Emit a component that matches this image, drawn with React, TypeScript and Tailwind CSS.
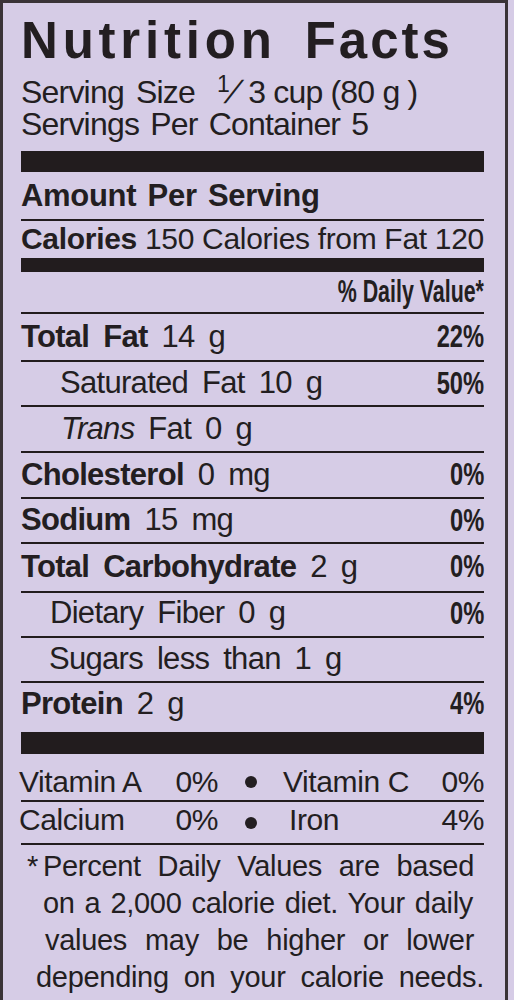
import React from 'react';

const ink = 'border-[#221c1e]';

const Pct = ({ children }: { children: React.ReactNode }) => (
    <span className="inline-block origin-right scale-x-[0.74] text-[32px] font-bold tracking-normal">{children}</span>
);

const Dot = () => (
    <div className="flex items-center justify-center">
        <span className="w-[12px] h-[12px] rounded-full bg-[#231e21]" />
    </div>
);

export default function App() {
    return (
        <div className="w-[514px] h-[1000px] overflow-hidden bg-[#d6cce6] font-['Liberation_Sans',Arial,sans-serif] text-[#231e21]">
            <div className="w-[508px] h-full border-[3px] border-b-0 border-[#3a3337] pl-[18px] pr-[21px]">
                {/* Title */}
                <div className="flex gap-[28px] pt-[12px] text-[51px] leading-[51px] font-bold">
                    <span className="tracking-[4.8px]">Nutrition</span>
                    <span className="tracking-[3px]">Facts</span>
                </div>

                {/* Serving info */}
                <div className="mt-[10px] text-[32px] leading-[32px] tracking-[-0.8px]">
                    <div className="h-[32px] whitespace-nowrap">
                        <span className="[word-spacing:4px]">Serving Size</span>
                        <span className="ml-[22px] text-[23px] leading-[0] align-[11px]">1</span>
                        <span className="inline-block skew-x-[-27deg]">/</span>
                        <span className="ml-[11px]">3 cup (80 g )</span>
                    </div>
                    <div className="h-[32px] [word-spacing:3px]">Servings Per Container 5</div>
                </div>

                <div className="mt-[11px] h-[21px] bg-[#221c1e]" />

                <div className="h-[47px] leading-[47px] text-[31px] font-bold tracking-[-0.3px] [word-spacing:3px]">Amount Per Serving</div>

                <div className={`flex justify-between h-[39px] border-t-2 ${ink} text-[30px] leading-[36px] tracking-[-0.3px]`}>
                    <span className="font-bold">Calories</span>
                    <span>150 Calories</span>
                    <span>from</span>
                    <span>Fat 120</span>
                </div>

                <div className="h-[14px] bg-[#221c1e]" />

                <div className="flex justify-end h-[40px] leading-[40px] text-[31px]">
                    <span className="inline-block origin-right scale-x-[0.69] font-bold whitespace-nowrap">% Daily Value*</span>
                </div>

                <div className="text-[31px] tracking-[-0.7px] [word-spacing:6px]">
                    <div className={`flex justify-between h-[48px] leading-[45px] border-t-2 ${ink}`}>
                        <span><b>Total Fat</b> 14 g</span>
                        <Pct>22%</Pct>
                    </div>
                    <div className={`flex justify-between h-[45px] leading-[42px] border-t-2 ${ink}`}>
                        <span className="pl-[39px]">Saturated Fat 10 g</span>
                        <Pct>50%</Pct>
                    </div>
                    <div className={`flex justify-between h-[46px] leading-[43px] border-t-2 ${ink}`}>
                        <span className="pl-[40px]"><i>Trans</i> Fat 0 g</span>
                    </div>
                    <div className={`flex justify-between h-[46px] leading-[43px] border-t-2 ${ink}`}>
                        <span><b>Cholesterol</b> 0 mg</span>
                        <Pct>0%</Pct>
                    </div>
                    <div className={`flex justify-between h-[45px] leading-[42px] border-t-2 ${ink}`}>
                        <span><b>Sodium</b> 15 mg</span>
                        <Pct>0%</Pct>
                    </div>
                    <div className={`flex justify-between h-[49px] leading-[45px] border-t-2 ${ink}`}>
                        <span><b>Total Carbohydrate</b> 2 g</span>
                        <Pct>0%</Pct>
                    </div>
                    <div className={`flex justify-between h-[45px] leading-[40px] border-t-2 ${ink}`}>
                        <span className="pl-[29px]">Dietary Fiber 0 g</span>
                        <Pct>0%</Pct>
                    </div>
                    <div className={`flex justify-between h-[45px] leading-[42px] border-t-2 ${ink}`}>
                        <span className="pl-[28px]">Sugars less than 1 g</span>
                    </div>
                    <div className={`flex justify-between h-[51px] leading-[41px] border-t-2 ${ink}`}>
                        <span><b>Protein</b> 2 g</span>
                        <Pct>4%</Pct>
                    </div>
                </div>

                <div className="h-[22px] bg-[#221c1e]" />

                {/* Vitamins */}
                <div className="text-[30px] tracking-[-0.4px]">
                    <div className="grid grid-cols-[197px_65px_1fr] h-[46px] pt-[10px] leading-[36px]">
                        <div className="flex justify-between -ml-[2px]">
                            <span>Vitamin A</span>
                            <span>0%</span>
                        </div>
                        <Dot />
                        <div className="flex justify-between">
                            <span>Vitamin C</span>
                            <span>0%</span>
                        </div>
                    </div>
                    <div className={`grid grid-cols-[197px_65px_1fr] h-[43px] leading-[36px] border-t-2 ${ink}`}>
                        <div className="flex justify-between -ml-[2px]">
                            <span>Calcium</span>
                            <span>0%</span>
                        </div>
                        <Dot />
                        <div className="flex justify-between">
                            <span className="pl-[6px]">Iron</span>
                            <span>4%</span>
                        </div>
                    </div>
                </div>

                {/* Footnote */}
                <div className={`border-t-2 ${ink} pt-[3px] text-[29px] leading-[37px] tracking-[-0.3px]`}>
                    <div className="flex ml-[6px] mr-[10px]">
                        <span>*</span>
                        <span className="flex-1 ml-[5px] text-justify [text-align-last:justify]">Percent Daily Values are based</span>
                    </div>
                    <div className="ml-[22px] mr-[11px] text-justify [text-align-last:justify]">on a 2,000 calorie diet. Your daily</div>
                    <div className="ml-[24px] mr-[10px] text-justify [text-align-last:justify]">values may be higher or lower</div>
                    <div className="ml-[15px] text-justify [text-align-last:justify]">depending on your calorie needs.</div>
                </div>
            </div>
        </div>
    );
}
